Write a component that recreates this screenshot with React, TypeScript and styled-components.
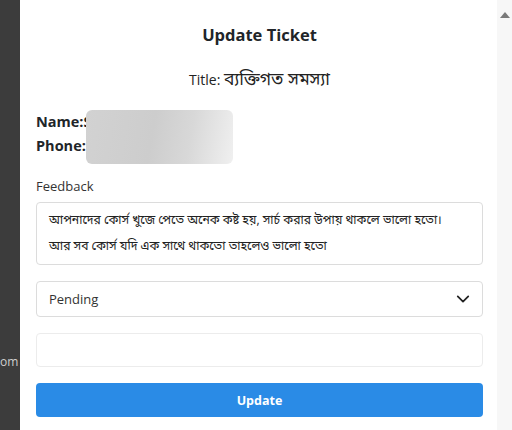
import * as React from 'react';
import styled, { createGlobalStyle } from 'styled-components';

const Global = createGlobalStyle`
  html, body { margin: 0; padding: 0; }
  body {
    font-family: "Open Sans", "Noto Sans", "Noto Sans Bengali", sans-serif;
    color: #212529;
    background: #fff;
  }
`;

const Page = styled.div`
  display: flex;
  width: 512px;
  height: 430px;
  overflow: hidden;
`;

const Backdrop = styled.div`
  position: relative;
  width: 20px;
  flex: none;
  background: #3c3c3c;
`;

const BackdropText = styled.span`
  position: absolute;
  left: 0;
  top: 353px;
  font-size: 12px;
  color: #cfcfcf;
`;

const Modal = styled.div`
  flex: 1;
  min-width: 0;
  background: #fff;
  padding: 24px 14px 0 16px;
  display: flex;
  flex-direction: column;
`;

const Heading = styled.h2`
  margin: 0;
  font-size: 16.5px;
  font-weight: 700;
  text-align: center;
  line-height: 22px;
`;

const Title = styled.p`
  margin: 22px 0 0;
  font-size: 14px;
  text-align: center;
  line-height: 20px;
  color: #222;
`;

const Bangla = styled.span<{ $size: number }>`
  font-size: ${p => p.$size}px;
`;

const Info = styled.div`
  position: relative;
  margin-top: 22px;
  display: flex;
  flex-direction: column;
  gap: 4px;
`;

const InfoRow = styled.div`
  font-size: 14.5px;
  font-weight: 700;
  line-height: 20px;
`;

const Blur = styled.div`
  position: absolute;
  left: 50px;
  top: -2px;
  width: 147px;
  height: 54px;
  border-radius: 6px;
  background: linear-gradient(100deg, #d2d2d2 0%, #cdcdcd 45%, #d8d8d8 70%, #f0f0f0 100%);
`;

const Label = styled.label`
  margin-top: 21px;
  font-size: 13px;
  line-height: 18px;
  color: #333;
`;

const Textarea = styled.div`
  margin-top: 7px;
  border: 1px solid #dcdcdc;
  border-radius: 4px;
  padding: 4px 12px 5px;
  font-size: 12.2px;
  line-height: 26px;
  color: #222;
  white-space: nowrap;
  overflow: hidden;
`;

const SelectBox = styled.div`
  margin-top: 16px;
  height: 34px;
  border: 1px solid #dcdcdc;
  border-radius: 4px;
  padding: 0 12px;
  display: flex;
  align-items: center;
  justify-content: space-between;
  font-size: 13px;
  color: #333;
`;

const Input = styled.div`
  margin-top: 16px;
  height: 32px;
  border: 1px solid #ececec;
  border-radius: 4px;
`;

const Button = styled.button`
  margin-top: 16px;
  height: 34px;
  border: none;
  border-radius: 4px;
  background: #2a8be6;
  color: #fff;
  font-family: inherit;
  font-size: 12.5px;
  font-weight: 700;
`;

const Scrollbar = styled.div`
  width: 15px;
  flex: none;
  background: #f7f7f7;
  display: flex;
  justify-content: center;
  align-items: flex-start;
  padding-top: 12px;
`;

const Arrow = styled.div`
  width: 0;
  height: 0;
  border-left: 5px solid transparent;
  border-right: 5px solid transparent;
  border-bottom: 6px solid #7a7a7a;
`;

export default function App() {
  return (
    <Page>
      <Global />
      <Backdrop>
        <BackdropText>om</BackdropText>
      </Backdrop>
      <Modal>
        <Heading>Update Ticket</Heading>
        <Title>
          Title: <Bangla $size={17.5}>ব্যক্তিগত সমস্যা</Bangla>
        </Title>
        <Info>
          <InfoRow>Name:S</InfoRow>
          <InfoRow>Phone:</InfoRow>
          <Blur />
        </Info>
        <Label>Feedback</Label>
        <Textarea>
          আপনাদের কোর্স খুজে পেতে অনেক কষ্ট হয়, সার্চ করার উপায় থাকলে ভালো হতো।
          <br />
          আর সব কোর্স যদি এক সাথে থাকতো তাহলেও ভালো হতো
        </Textarea>
        <SelectBox>
          <span>Pending</span>
          <svg width="14" height="14" viewBox="0 0 16 16" fill="none" stroke="#222" strokeWidth="2" strokeLinecap="round" strokeLinejoin="round">
            <path d="M2 5l6 6 6-6" />
          </svg>
        </SelectBox>
        <Input />
        <Button>Update</Button>
      </Modal>
      <Scrollbar>
        <Arrow />
      </Scrollbar>
    </Page>
  );
}
